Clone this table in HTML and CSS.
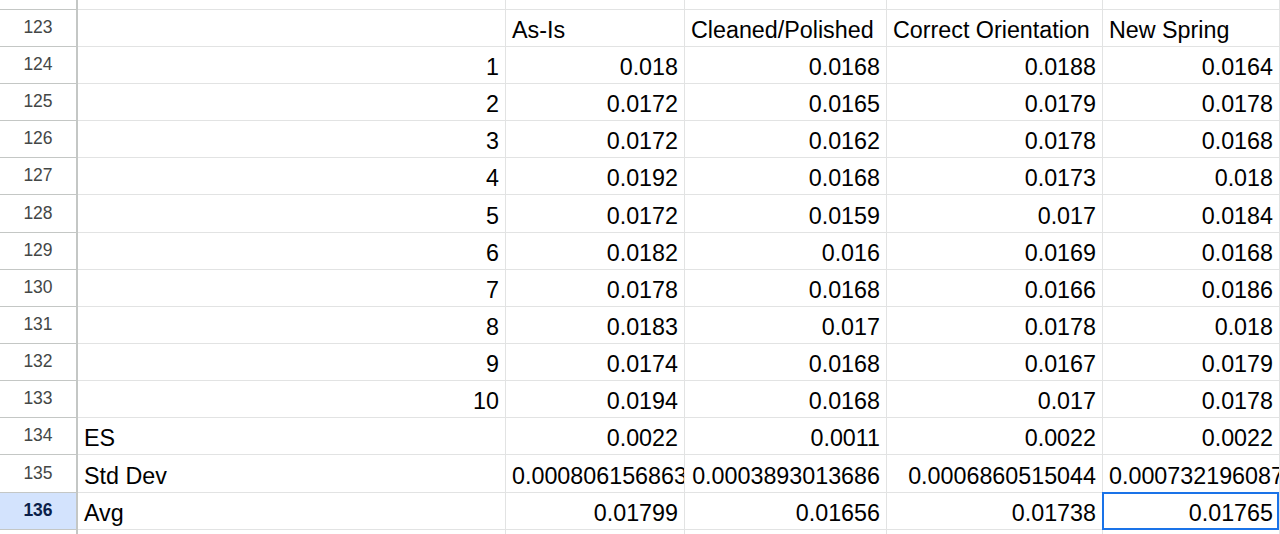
FILE: index.html
```html
<!DOCTYPE html>
<html>
<head>
<meta charset="utf-8">
<link rel="stylesheet" href="styles.css">
</head>
<body>
<div class="sheet">
  <div class="rh top"></div><div class="c"></div><div class="c"></div><div class="c"></div><div class="c"></div><div class="c"></div>

  <div class="rh">123</div><div class="c"></div><div class="c">As-Is</div><div class="c">Cleaned/Polished</div><div class="c">Correct Orientation</div><div class="c">New Spring</div>
  <div class="rh">124</div><div class="c n">1</div><div class="c n">0.018</div><div class="c n">0.0168</div><div class="c n">0.0188</div><div class="c n">0.0164</div>
  <div class="rh">125</div><div class="c n">2</div><div class="c n">0.0172</div><div class="c n">0.0165</div><div class="c n">0.0179</div><div class="c n">0.0178</div>
  <div class="rh">126</div><div class="c n">3</div><div class="c n">0.0172</div><div class="c n">0.0162</div><div class="c n">0.0178</div><div class="c n">0.0168</div>
  <div class="rh">127</div><div class="c n">4</div><div class="c n">0.0192</div><div class="c n">0.0168</div><div class="c n">0.0173</div><div class="c n">0.018</div>
  <div class="rh">128</div><div class="c n">5</div><div class="c n">0.0172</div><div class="c n">0.0159</div><div class="c n">0.017</div><div class="c n">0.0184</div>
  <div class="rh">129</div><div class="c n">6</div><div class="c n">0.0182</div><div class="c n">0.016</div><div class="c n">0.0169</div><div class="c n">0.0168</div>
  <div class="rh">130</div><div class="c n">7</div><div class="c n">0.0178</div><div class="c n">0.0168</div><div class="c n">0.0166</div><div class="c n">0.0186</div>
  <div class="rh">131</div><div class="c n">8</div><div class="c n">0.0183</div><div class="c n">0.017</div><div class="c n">0.0178</div><div class="c n">0.018</div>
  <div class="rh">132</div><div class="c n">9</div><div class="c n">0.0174</div><div class="c n">0.0168</div><div class="c n">0.0167</div><div class="c n">0.0179</div>
  <div class="rh">133</div><div class="c n">10</div><div class="c n">0.0194</div><div class="c n">0.0168</div><div class="c n">0.017</div><div class="c n">0.0178</div>
  <div class="rh">134</div><div class="c">ES</div><div class="c n">0.0022</div><div class="c n">0.0011</div><div class="c n">0.0022</div><div class="c n">0.0022</div>
  <div class="rh">135</div><div class="c">Std Dev</div><div class="c n">0.000806156863</div><div class="c n">0.0003893013686</div><div class="c n">0.0006860515044</div><div class="c n">0.000732196087</div>
  <div class="rh sel">136</div><div class="c">Avg</div><div class="c n">0.01799</div><div class="c n">0.01656</div><div class="c n">0.01738</div><div class="c n active">0.01765</div>

  <div class="rh"></div><div class="c"></div><div class="c"></div><div class="c"></div><div class="c"></div><div class="c"></div>
</div>
</body>
</html>
```
FILE: styles.css
```css
html, body {
  margin: 0;
  padding: 0;
  background: #ffffff;
  overflow: hidden;
}

.sheet {
  display: grid;
  grid-template-columns: 78px 428px 179px 202px 216px 177px;
  grid-template-rows: 10px repeat(5, 37px) 38px repeat(6, 37px) 38px 37px 37px;
  width: 1280px;
  font-family: "Liberation Sans", Arial, sans-serif;
}

.c {
  box-sizing: border-box;
  border-right: 1px solid #e2e3e3;
  border-bottom: 1px solid #e2e3e3;
  font-size: 23.3px;
  line-height: 26px;
  color: #000000;
  padding: 0 6px 3px 6px;
  white-space: nowrap;
  overflow: hidden;
  display: flex;
  flex-direction: column;
  justify-content: flex-end;
  text-align: left;
  position: relative;
}

.c.n {
  text-align: right;
}

.rh {
  box-sizing: border-box;
  border-right: 2px solid #c4c7c5;
  border-bottom: 1px solid #c4c7c5;
  font-size: 17.5px;
  color: #444746;
  display: flex;
  align-items: center;
  justify-content: center;
  padding-bottom: 1px;
  background: #ffffff;
}

.rh.sel {
  background: #d3e3fd;
  color: #0b1f4a;
  font-weight: bold;
}

.c.active {
  overflow: visible;
}

.c.active::after {
  content: "";
  position: absolute;
  top: -1px;
  left: -1px;
  right: 0;
  bottom: -1px;
  border: 2px solid #1a73e8;
  pointer-events: none;
}
```
